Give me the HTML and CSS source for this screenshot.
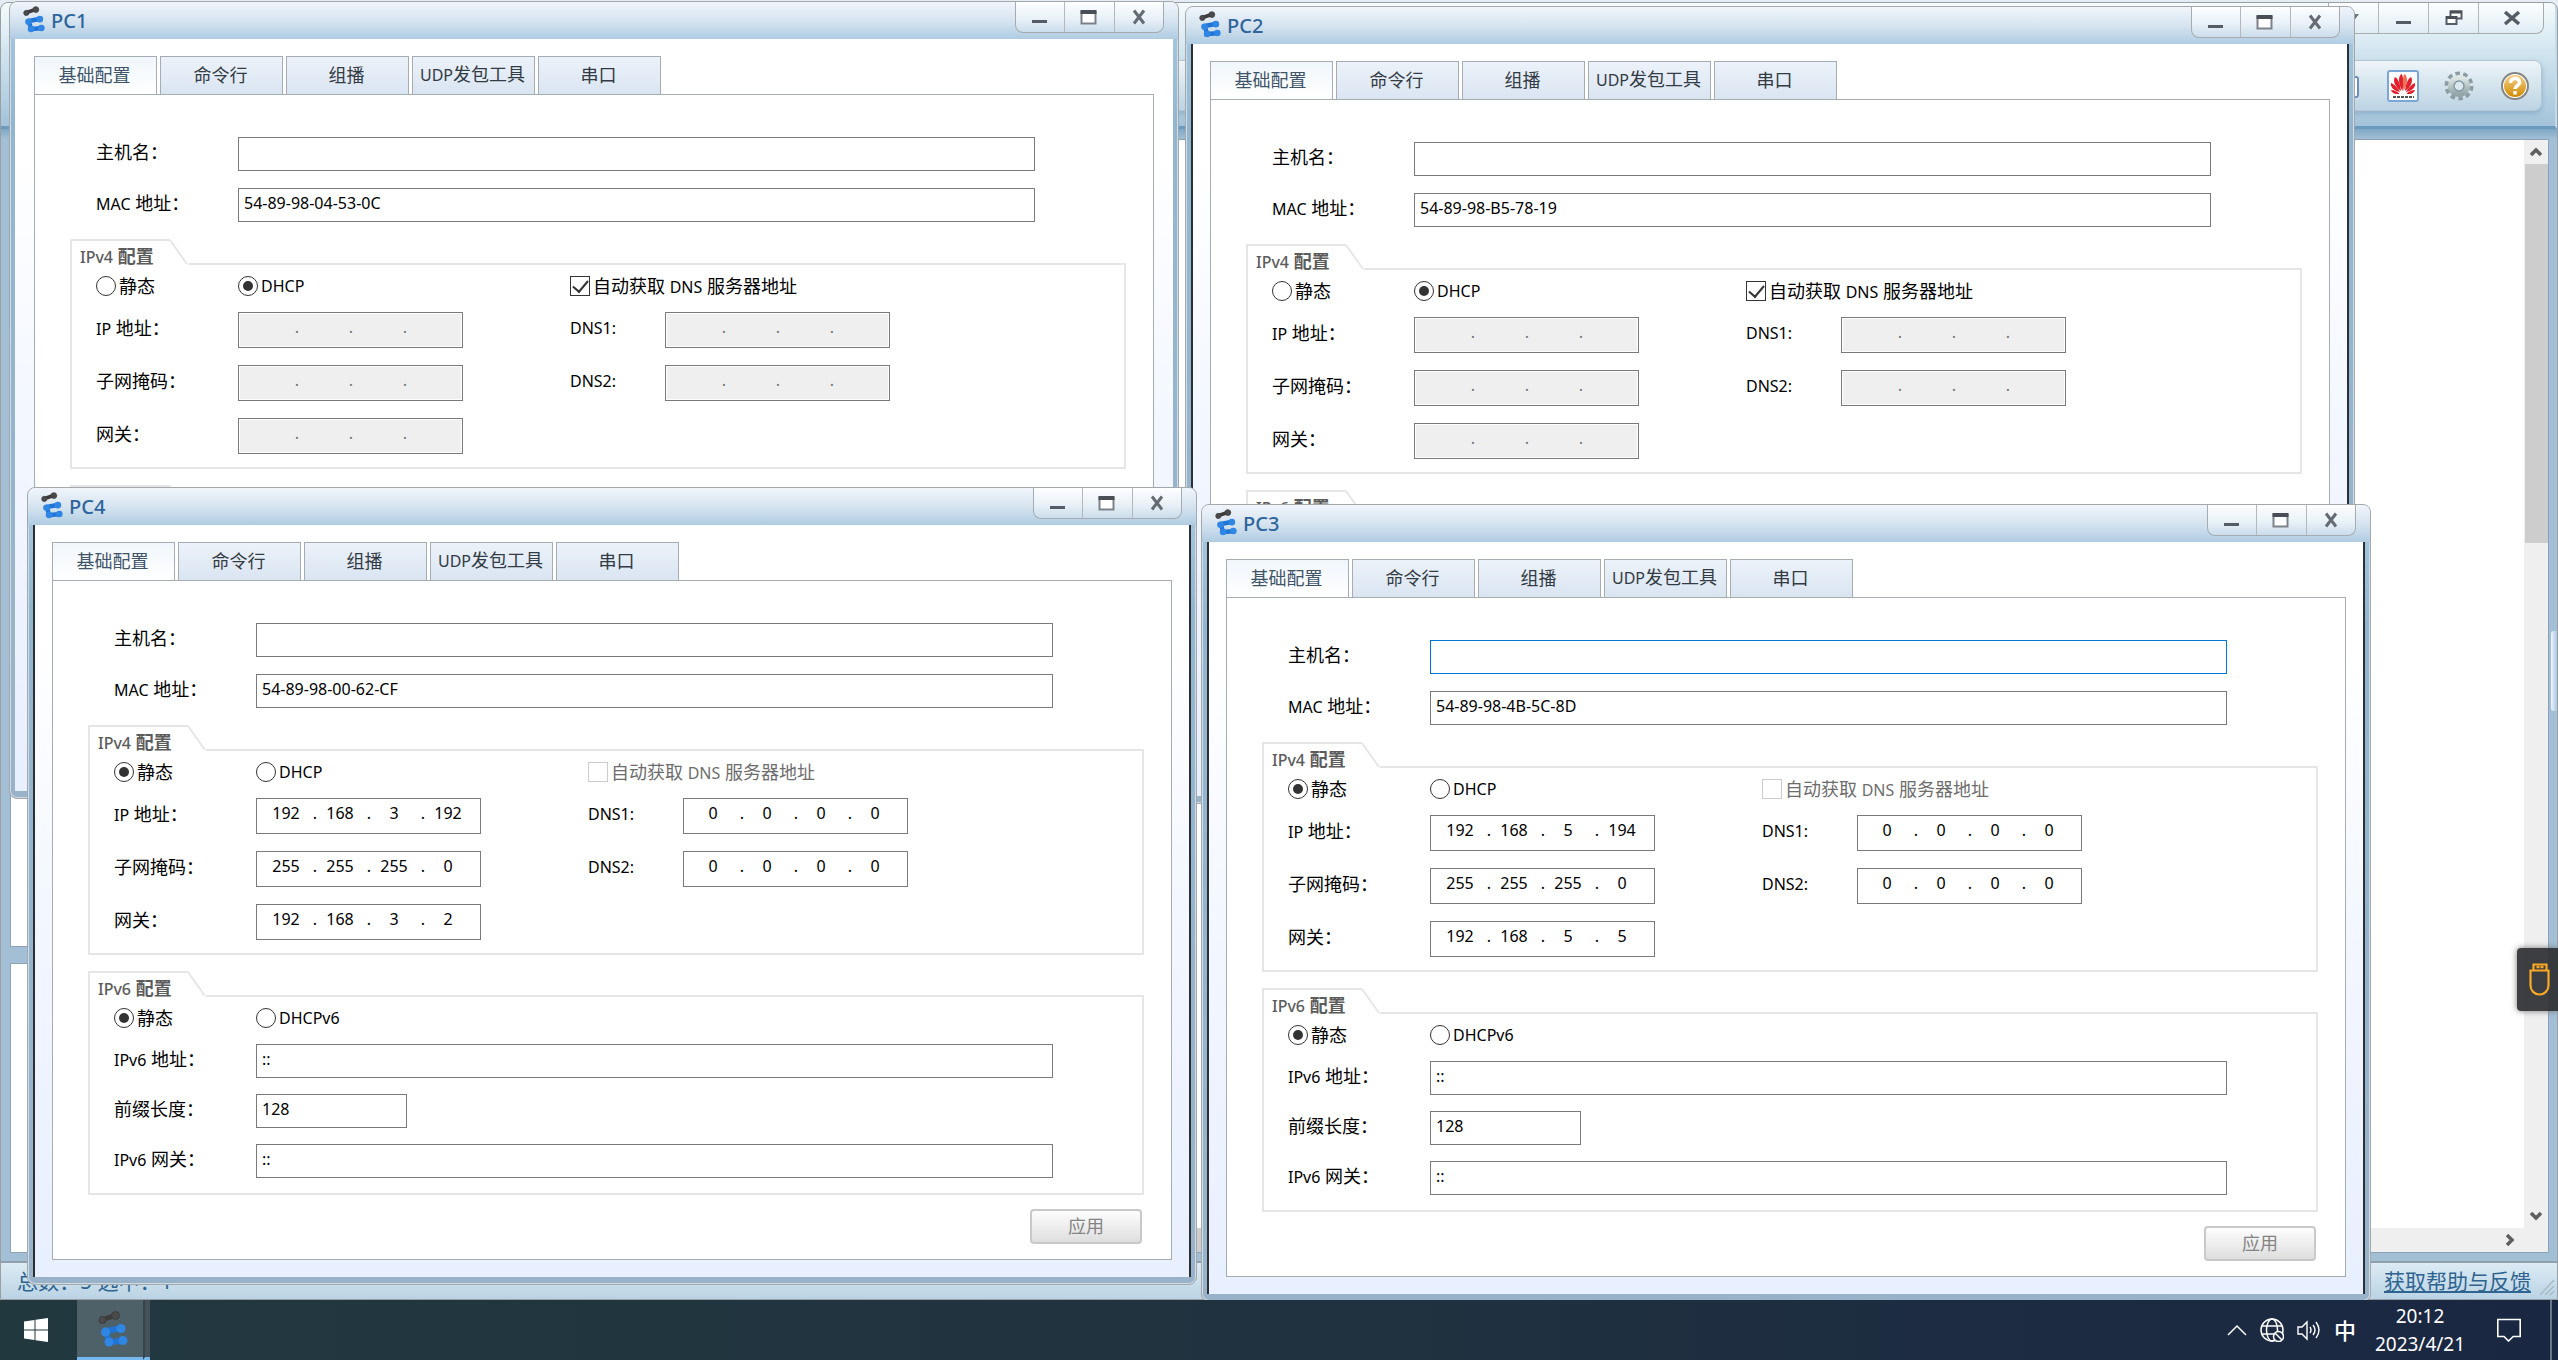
FILE: index.html
```html
<!DOCTYPE html>
<html lang="zh-CN">
<head>
<meta charset="utf-8">
<title>eNSP</title>
<link rel="stylesheet" href="styles.css">
</head>
<body>
<svg class="defs" aria-hidden="true">
  <defs>
    <linearGradient id="g-gold" x1="0" y1="0" x2="0" y2="1"><stop offset="0" stop-color="#f5d08a"/><stop offset="1" stop-color="#d08a00"/></linearGradient>
    <linearGradient id="g-gear" x1="0" y1="0" x2="0" y2="1"><stop offset="0" stop-color="#dfe6e6"/><stop offset="1" stop-color="#94a5a8"/></linearGradient>
  </defs>
  <symbol id="i-ensp" viewBox="0 0 30 36">
    <g stroke="#3c3c3c" fill="#4a4a4a"><path d="M5 8.500 17 4.500" stroke-width="5"/><circle cx="4.500" cy="9" r="3.500"/><circle cx="17.500" cy="4.500" r="4"/></g>
    <path d="M24 17 8 20 11 31 25 30" fill="none" stroke="#1f74d4" stroke-width="6" stroke-linejoin="round"/>
    <g fill="#2f86e4"><circle cx="23" cy="17.500" r="4.500"/><circle cx="7.500" cy="21" r="4.500"/><circle cx="11" cy="31" r="4.500"/><circle cx="25" cy="29.500" r="4.500"/></g>
  </symbol>
  <symbol id="i-min" viewBox="0 0 18 18"><path d="M1 13.500h15" stroke="#565c66" stroke-width="3"/></symbol>
  <symbol id="i-max" viewBox="0 0 18 18"><path d="M1.500 3v12.500h14V3" fill="#fff" stroke="#7c828a" stroke-width="2"/><path d="M.5 4h16" stroke="#4a4e57" stroke-width="4"/></symbol>
  <symbol id="i-close" viewBox="0 0 18 18"><path d="M4 2.500 14 15.500M14 2.500 4 15.500" stroke="#666b73" stroke-width="3"/></symbol>
</svg>

<main class="desktop">
  <section class="app" aria-label="eNSP">
    <header class="app-head">
      <div class="app-buttons">
        <button class="wbtn" aria-label="菜单"><svg class="ico" viewBox="0 0 18 18"><path d="M5 5h9l-4.500 6z" fill="#6d737b"/></svg></button>
        <button class="wbtn" aria-label="最小化"><svg class="ico"><use href="#i-min"/></svg></button>
        <button class="wbtn" aria-label="还原"><svg class="ico" viewBox="0 0 18 18"><path d="M5.500 2.500h11v7h-11z" fill="#fff" stroke="#565c66" stroke-width="2"/><path d="M1.500 8h10v7h-10z" fill="#fff" stroke="#565c66" stroke-width="2"/><path d="M5 3h12M1 8.500h11" stroke="#4a4e57" stroke-width="3"/></svg></button>
        <button class="wbtn wbtn-wide" aria-label="关闭"><svg class="ico" viewBox="0 0 18 18"><path d="M3 3 17 15M17 3 3 15" stroke="#565c66" stroke-width="3.500"/></svg></button>
      </div>
      <div class="toolbar">
        <button class="tool" aria-label="文档"><svg viewBox="0 0 32 32"><rect x="3" y="7" width="24" height="20" rx="2" fill="#fff" stroke="#6f8fb8" stroke-width="2"/><path d="M8 13h14M8 18h14" stroke="#7aa0cc" stroke-width="2"/></svg></button>
        <button class="tool" aria-label="华为"><svg viewBox="0 0 32 32"><rect x="1" y="1" width="30" height="30" rx="2" fill="#fff" stroke="#7ea6d4" stroke-width="2"/><g fill="#e0202c"><path d="M15.500 21C11 14 11 6 14.500 4c2 2 2 10 1 17z"/><path d="M16.500 21C21 14 21 6 17.500 4c-2 2-2 10-1 17z" fill="#f0705a"/><path d="M14 21C8 17 5.500 11 8 7c3 1 5.500 8 6 14z"/><path d="M18 21c6-4 8.500-10 6-14-3 1-5.500 8-6 14z"/><path d="M13 22C7 21 3 17 4 13c3 1 7 5 9 9z"/><path d="M19 22c6-1 10-5 9-9-3 1-7 5-9 9z"/><path d="M12.500 23.500c-4 1.500-8-.5-8.500-3.500 3 0 6 1.500 8.500 3.500zM19.500 23.500c4 1.500 8-.5 8.500-3.500-3 0-6 1.500-8.500 3.500z"/></g><path d="M6 27h21" stroke="#555" stroke-width="2" stroke-dasharray="3 1"/></svg></button>
        <button class="tool" aria-label="设置"><svg viewBox="0 0 32 32"><circle cx="16" cy="16" r="12.500" fill="none" stroke="#8c9ea2" stroke-width="4" stroke-dasharray="4.500 3.350"/><circle cx="16" cy="16" r="8" fill="#e6eef0" stroke="url(#g-gear)" stroke-width="6"/><circle cx="16" cy="16" r="5" fill="#dbe8ee" stroke="#8299a0" stroke-width="1.500"/></svg></button>
        <button class="tool" aria-label="帮助"><svg viewBox="0 0 32 32"><circle cx="16" cy="16" r="13" fill="#fff" stroke="#858585" stroke-width="2"/><circle cx="16" cy="16" r="11" fill="url(#g-gold)"/><path d="M11.500 13c0-6 9-6 9-.5 0 3.500-4.500 3-4.500 6.500M16 21v3.500" fill="none" stroke="#fff" stroke-width="3.500"/></svg></button>
      </div>
    </header>
    <div class="work">
      <div class="side"><div class="side-top"></div><div class="side-low"></div></div>
      <div class="canvas">
        <div class="sheet"></div>
        <div class="vbar"><svg class="arrow" viewBox="0 0 16 16"><path d="M3 11l5-5 5 5" fill="none" stroke="#5f5f5f" stroke-width="3.500"/></svg><div class="vthumb"></div><svg class="arrow arrow-end" viewBox="0 0 16 16"><path d="M3 5l5 5 5-5" fill="none" stroke="#5f5f5f" stroke-width="3.500"/></svg></div>
        <div class="hbar"><div class="hthumb"></div><svg class="arrow" viewBox="0 0 16 16"><path d="M5 3l5 5-5 5" fill="none" stroke="#5f5f5f" stroke-width="3.500"/></svg></div>
      </div>
      <div class="drawer"></div>
    </div>
    <footer class="status"><span>总数：5 选中：1</span><a href="#help">获取帮助与反馈</a>
      <svg class="grip" viewBox="0 0 16 16"><path d="M1 16 15 1M6 16l9-9M11 16l4-4" stroke="#a8bac6" stroke-width="1.500"/></svg></footer>
  </section>

  <div id="windows"></div>

  <button class="usb" aria-label="USB"><svg viewBox="0 0 22 34"><path d="M1.500 7.500h18v15a9 9 0 0 1-18 0zM4.500 7V1.500h13V7" fill="none" stroke="#f9a825" stroke-width="2.200"/><path d="M7.500 4h3M11.500 4h3" stroke="#f9a825" stroke-width="2.400"/></svg></button>
</main>

<footer class="taskbar">
  <button class="start" aria-label="开始"><svg viewBox="0 0 24 24"><path d="M0 3.500 10.500 2v9.500H0zM11.500 1.800 24 0v11.500H11.500zM0 12.500h10.500V22L0 20.500zM11.500 12.500H24V24l-12.500-1.800z" fill="#fff"/></svg></button>
  <button class="task" aria-label="eNSP"><svg><use href="#i-ensp"/></svg></button>
  <span class="task-more"></span>
  <div class="tray">
    <svg class="t-up" viewBox="0 0 20 12"><path d="M1 11l9-9 9 9" fill="none" stroke="#fff" stroke-width="1.500"/></svg>
    <svg class="t-ico" viewBox="0 0 24 24"><g fill="none" stroke="#fff" stroke-width="1.500"><circle cx="12" cy="12" r="11"/><ellipse cx="12" cy="12" rx="5.500" ry="11"/><path d="M2 8h20M2 16h13"/></g><circle cx="18.500" cy="18.500" r="5" fill="#1c2840" stroke="#fff" stroke-width="1.500"/><path d="M15 15l7 7" stroke="#fff" stroke-width="1.500"/></svg>
    <svg class="t-ico" viewBox="0 0 24 24"><g fill="none" stroke="#fff" stroke-width="1.400"><path d="M1 9h4l5-5v17l-5-5H1z"/><path d="M13 9q2 3 0 6M16 7q4 5 0 10M19 4q6 8 0 16"/></g></svg>
    <span class="ime">中</span>
    <div class="clock"><span>20:12</span><span>2023/4/21</span></div>
    <svg class="t-ico" viewBox="0 0 24 24"><path d="M.8 1.500h22.400v17h-7L11.500 23l-4.500-4.500H.8z" fill="none" stroke="#fff" stroke-width="1.600"/></svg>
    <span class="peek"></span>
  </div>
</footer>

<template id="pc-window">
  <article class="pc">
    <header class="title">
      <svg class="logo"><use href="#i-ensp"/></svg><h1></h1>
      <div class="wbtns">
        <button class="wbtn" aria-label="最小化"><svg class="ico"><use href="#i-min"/></svg></button>
        <button class="wbtn" aria-label="最大化"><svg class="ico"><use href="#i-max"/></svg></button>
        <button class="wbtn" aria-label="关闭"><svg class="ico"><use href="#i-close"/></svg></button>
      </div>
    </header>
    <div class="client">
      <nav class="tabs">
        <button class="tab tab-on">基础配置</button><button class="tab">命令行</button><button class="tab">组播</button><button class="tab"><span class="lat">UDP</span>发包工具</button><button class="tab">串口</button>
      </nav>
      <form class="panel">
        <div class="basics">
          <label class="row"><span class="lab">主机名：</span><input class="field" data-f="host"></label>
          <label class="row"><span class="lab"><span class="lat">MAC</span> 地址：</span><input class="field" data-f="mac"></label>
        </div>
        <section class="group">
          <div class="g-head"><h2><span class="lat">IPv4</span> 配置</h2><svg viewBox="0 0 18 26"><path d="M0 1 17 25" stroke="#e6e6e6" stroke-width="2"/></svg><i></i></div>
          <div class="g-body">
            <div class="v4 radios">
              <label class="opt"><input type="radio" data-f="v4static">静态</label>
              <label class="opt"><input type="radio" data-f="v4dhcp"><span class="lat">DHCP</span></label>
              <label class="opt opt-dns"><input type="checkbox" data-f="auto"><span>自动获取 <span class="lat">DNS</span> 服务器地址</span></label>
            </div>
            <div class="v4 addrs">
              <span class="lab"><span class="lat">IP</span> 地址：</span><div class="ip" role="group" data-ip="ip" aria-label="IP 地址"></div>
              <span class="lab lat">DNS1:</span><div class="ip" role="group" data-ip="dns1" aria-label="DNS1"></div>
              <span class="lab">子网掩码：</span><div class="ip" role="group" data-ip="mask" aria-label="子网掩码"></div>
              <span class="lab lat">DNS2:</span><div class="ip" role="group" data-ip="dns2" aria-label="DNS2"></div>
              <span class="lab">网关：</span><div class="ip" role="group" data-ip="gw" aria-label="网关"></div>
            </div>
          </div>
        </section>
        <section class="group">
          <div class="g-head"><h2><span class="lat">IPv6</span> 配置</h2><svg viewBox="0 0 18 26"><path d="M0 1 17 25" stroke="#e6e6e6" stroke-width="2"/></svg><i></i></div>
          <div class="g-body">
            <div class="v4 radios">
              <label class="opt"><input type="radio" data-f="v6static" checked>静态</label>
              <label class="opt"><input type="radio" data-f="v6dhcp"><span class="lat">DHCPv6</span></label>
            </div>
            <div class="v6">
              <label class="row"><span class="lab"><span class="lat">IPv6</span> 地址：</span><input class="field" value="::"></label>
              <label class="row"><span class="lab">前缀长度：</span><input class="field field-s" value="128"></label>
              <label class="row"><span class="lab"><span class="lat">IPv6</span> 网关：</span><input class="field" value="::"></label>
            </div>
          </div>
        </section>
        <button type="button" class="apply" disabled>应用</button>
      </form>
    </div>
  </article>
</template>
<script src="windows.js"></script>
</body>
</html>
```

FILE: styles.css
```css
* { box-sizing: border-box; }
body {
  margin: 0;
  height: 100vh;
  display: grid;
  grid-template-rows: 1fr 60px;
  overflow: hidden;
  font: 18px/24px "Noto Sans", "Noto Sans CJK SC", sans-serif;
  color: #000;
}
button, input { font: inherit; color: inherit; }
button { padding: 0; border: 0; background: none; }
h1, h2 { margin: 0; font-weight: 400; }
svg { display: block; flex: none; }
.defs { position: absolute; width: 0; height: 0; }
.lat { font-size: 16px; }

.desktop { position: relative; overflow: hidden; display: flex; padding-top: 2px; background: #e6ecf4; }

/* main application */
.app { flex: 1; display: flex; flex-direction: column; border: 1px solid #9a9fa4; border-radius: 8px 8px 0 0; background: #a3bfd6; overflow: hidden; }
.app-head { height: 126px; background: linear-gradient(#f6fbfd, #d3e6f0 38%, #a3c3da); border-bottom: 3px solid #6a9bbc; border-right: 2px solid #c4dbe9; }
.app-buttons, .wbtns { display: flex; border: 1px solid #a6abb0; border-top: 0; border-radius: 0 0 8px 8px; background: linear-gradient(#fdfeff, #e9f1f8 55%, #cbddeb); }
.app-buttons { width: 216px; height: 31px; margin: 0 11px 0 auto; background: linear-gradient(#fdfeff, #dfedf4); }
.wbtn { flex: 1; display: grid; place-items: center; }
.wbtn + .wbtn { border-left: 1px solid #b2b8bd; }
.wbtn-wide { flex: 0 0 65px; }
.ico { width: 18px; height: 18px; }
.toolbar { display: flex; justify-content: flex-end; align-items: center; gap: 24px; height: 51px; margin: 26px 13px 0 600px; padding-right: 10px; border: 1px solid #b5c6d2; border-radius: 8px; background: linear-gradient(#eef5f8, #bcd3e3); box-shadow: 0 3px 5px #8fb2cc; }
.tool svg { width: 32px; height: 32px; }
.work { flex: 1; min-height: 0; display: flex; gap: 6px; padding: 10px 0 8px 9px; background: linear-gradient(#7fa8c6, #a3bfd6 10px); }
.side { width: 300px; display: flex; flex-direction: column; gap: 16px; }
.side-top, .side-low { border: 1px solid #8ba2b6; background: #fff; }
.side-top { flex: 81; }
.side-low { flex: 29; }
.canvas { flex: 1; display: grid; grid-template: 1fr 24px / 1fr 24px; border: 1px solid #8ba2b6; background: #efefef; }
.sheet { background: #fff; }
.vbar { display: flex; flex-direction: column; align-items: center; gap: 4px; padding-top: 4px; }
.vthumb { width: 23px; height: 35%; background: #cdcdcd; }
.arrow { width: 16px; height: 16px; }
.arrow-end { margin-top: auto; margin-bottom: 4px; }
.hbar { display: flex; align-items: center; justify-content: space-between; padding: 0 6px; }
.hthumb { width: 60%; height: 24px; background: #cdcdcd; }
.drawer { align-self: center; width: 6px; height: 80px; margin: 0 0 50px -4px; border-radius: 3px 0 0 3px; background: linear-gradient(90deg, #eef5fa, #a9c7de); }
.status { display: flex; align-items: center; justify-content: space-between; height: 38px; padding: 0 2px 0 16px; border-top: 2px solid #8f9fac; background: linear-gradient(#dcebf4, #bad3e4); font-size: 21px; color: #2f6390; }
.status a { margin-left: auto; margin-right: 8px; color: inherit; text-underline-offset: 2px; }
.grip { width: 16px; height: 16px; margin-top: 12px; }

/* device windows float freely on the desktop */
.pc { position: absolute; width: 1170px; border: 1px solid #a5a8ab; border-radius: 8px; padding: 0 5px 7px; background: linear-gradient(#a9cae2, #93b6d0 120px, #98b3c9); box-shadow: inset 0 0 0 1px #cfdce6; }
.pc1 { left: 9px; top: 1px; }
.pc2 { left: 1185px; top: 6px; }
.pc4 { left: 27px; top: 487px; }
.pc3 { left: 1201px; top: 504px; }
.title { display: flex; align-items: flex-start; height: 37px; margin: 0 -5px; padding: 0 14px 0 13px; border-radius: 7px 7px 0 0; background: linear-gradient(#f1f5fb, #d6e4f0 50%, #b0cce2); }
.logo { width: 22px; height: 27px; margin: 4px 6px 0 0; }
.title h1 { font-size: 20px; font-weight: 500; line-height: 38px; color: #2f659c; }
.wbtns { width: 149px; height: 31px; margin-left: auto; }
.client { padding: 17px 19px; background: linear-gradient(#fff 15%, #f3f7ff 50%, #e8effe); }
.pc2 .client, .pc3 .client, .pc4 .client { box-shadow: inset 2px 0 #2c3034, inset -2px 0 #2c3034; }
.tabs { display: flex; gap: 3px; }
.tab { width: 123px; height: 38px; padding: 0 2px 2px 0; border: 1px solid #a6adb2; border-bottom: 0; background: linear-gradient(#ecf2f9, #dae5f2); color: #333b44; }
.tab-on { background: linear-gradient(#f0f6fc, #fff); color: #3f5468; }
.panel { display: flex; flex-direction: column; padding: 42px 27px 15px 35px; border: 1px solid #a6adb0; background: #fff; }
.basics { display: grid; gap: 17px; padding-left: 26px; }
.row { display: flex; align-items: center; }
.lab { width: 142px; padding-bottom: 4px; }
.field { width: 797px; height: 34px; padding: 0 5px 4px; border: 1px solid #7a7a7a; background: #fff; font-size: 16px; outline: 0; }
.field-s { width: 151px; }
.field-focus { border-color: #0078d7; }
.group { margin-top: 16px; }
.basics + .group { margin-top: 17px; }
.g-head { display: flex; height: 26px; }
.g-head h2 { width: 100px; padding: 2px 0 0 8px; border: solid #e6e6e6; border-width: 2px 0 0 2px; font-size: 18px; line-height: 26px; font-weight: 700; color: #5c5c5c; white-space: nowrap; }
.g-head h2 .lat { font-weight: 500; }
.g-head svg { width: 18px; height: 26px; }
.g-head i { flex: 1; border: solid #e6e6e6; border-width: 0 0 2px; }
.g-body { padding: 11px 0 13px 24px; border: solid #e6e6e6; border-width: 0 2px 2px; }
.v4 { display: grid; grid-template-columns: 142px 332px 95px 225px; align-items: center; }
.radios { height: 20px; margin-bottom: 16px; }
.addrs { row-gap: 17px; }
.v6 { display: grid; gap: 16px; padding-bottom: 2px; }
.addrs .lab { width: auto; }
.opt { display: flex; align-items: center; gap: 3px; height: 20px; }
.opt-dns { grid-column: span 2; }
.opt input { appearance: none; flex: none; width: 20px; height: 20px; margin: 0; border: 1px solid #333; background: #fff; display: grid; place-items: center; }
.opt input[type="radio"] { border-radius: 50%; }
.opt input[type="radio"]:checked::before { content: ""; width: 10px; height: 10px; border-radius: 50%; background: #333; }
.opt input[type="checkbox"]:checked::before { content: ""; width: 7px; height: 13px; margin-bottom: 4px; border: solid #333; border-width: 0 2px 2px 0; transform: rotate(40deg); }
.opt input:disabled { border-color: #ccc; }
.opt input:disabled + span { color: #6d6d6d; }
.ip { display: flex; align-items: center; width: 225px; height: 36px; padding: 0 0 6px 6px; border: 1px solid #7a7a7a; background: #fff; font-size: 16px; }
.ip input { width: 46px; height: 26px; padding: 0; border: 0; background: none; text-align: center; outline: 0; }
.ip span { width: 8px; text-align: right; }
.ip-off { background: #efefef; color: #777; box-shadow: inset 0 0 0 1px #fff; }
.apply { align-self: flex-end; width: 112px; height: 35px; margin: 14px 2px 0 0; padding-bottom: 2px; border: 2px solid #c9c9c9; border-radius: 4px; background: linear-gradient(#fdfdfd, #dedede); color: #848484; }

.usb { position: absolute; right: 0; top: 948px; width: 41px; height: 63px; padding-left: 12px; border-radius: 4px 0 0 4px; background: rgba(45, 47, 50, .92); box-shadow: 0 0 6px #777; }
.usb svg { width: 22px; height: 34px; }

/* taskbar */
.taskbar { display: flex; background: linear-gradient(90deg, #22383f, #20323f 50%, #1a2742); color: #fff; }
.start { width: 77px; padding: 0 5px 0 0; display: grid; place-items: center; }
.start svg { width: 24px; height: 24px; }
.task { width: 66px; padding-left: 6px; display: grid; place-items: center; background: #4e6068; border-bottom: 3px solid #76b9ed; }
.task svg { width: 30px; height: 36px; }
.task-more { width: 7px; background: #46525a; border-left: 2px solid #35444c; border-bottom: 3px solid #76b9ed; }
.tray { display: flex; align-items: center; margin-left: auto; padding-right: 6px; gap: 13px; }
.t-up { width: 20px; height: 12px; }
.t-ico { width: 24px; height: 24px; }
.ime { font-size: 22px; font-weight: 500; }
.clock { display: flex; flex-direction: column; width: 102px; margin-right: 13px; text-align: center; font-size: 19px; line-height: 28px; }
.peek { width: 2px; height: 60px; margin-left: 16px; background: #6f7785; }
```

FILE: windows.js
```js
const zero = "0.0.0.0";
const devices = [
  { id: "PC1", mac: "54-89-98-04-53-0C", dhcp: true },
  { id: "PC2", mac: "54-89-98-B5-78-19", dhcp: true },
  { id: "PC4", mac: "54-89-98-00-62-CF", ip: "192.168.3.192", mask: "255.255.255.0", gw: "192.168.3.2", dns1: zero, dns2: zero },
  { id: "PC3", mac: "54-89-98-4B-5C-8D", ip: "192.168.5.194", mask: "255.255.255.0", gw: "192.168.5.5", dns1: zero, dns2: zero, focus: true }
];
const template = document.getElementById("pc-window");
const host = document.getElementById("windows");

for (const d of devices) {
  const win = template.content.cloneNode(true);
  const f = (name) => win.querySelector(`[data-f="${name}"]`);
  win.querySelector(".pc").classList.add(d.id.toLowerCase());
  win.querySelector("h1").textContent = d.id;
  f("mac").value = d.mac;
  if (d.focus) f("host").classList.add("field-focus");

  f("v4static").name = f("v4dhcp").name = `${d.id}-v4`;
  f("v6static").name = f("v6dhcp").name = `${d.id}-v6`;
  f(d.dhcp ? "v4dhcp" : "v4static").checked = true;
  f("auto").checked = !!d.dhcp;
  f("auto").disabled = !d.dhcp;

  for (const box of win.querySelectorAll("[data-ip]")) {
    const parts = (d[box.dataset.ip] || "...").split(".");
    box.classList.toggle("ip-off", !!d.dhcp);
    parts.forEach((part, i) => {
      const input = document.createElement("input");
      input.value = part;
      input.disabled = !!d.dhcp;
      input.setAttribute("aria-label", `${box.getAttribute("aria-label")} ${i + 1}`);
      if (i) {
        const dot = document.createElement("span");
        dot.textContent = ".";
        box.append(dot);
      }
      box.append(input);
    });
  }
  host.append(win);
}
```
